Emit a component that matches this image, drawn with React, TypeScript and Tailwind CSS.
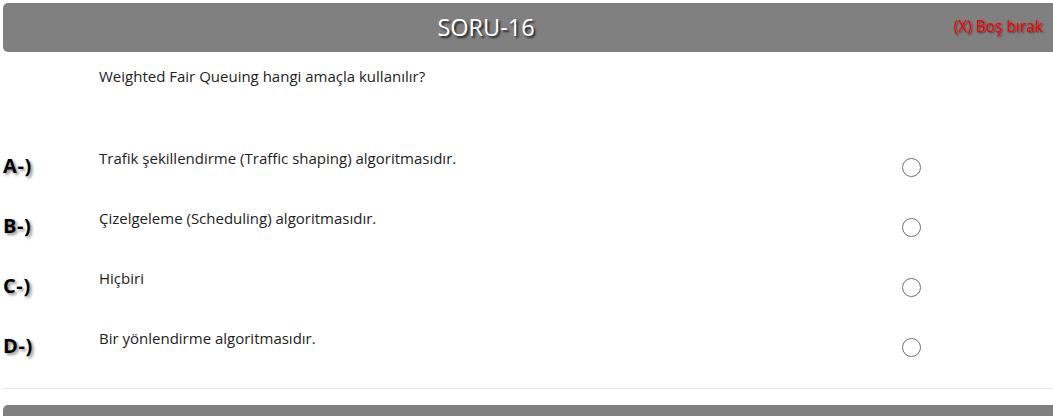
import React from 'react';

const options = [
  { key: 'A', text: 'Trafik şekillendirme (Traffic shaping) algoritmasıdır.' },
  { key: 'B', text: 'Çizelgeleme (Scheduling) algoritmasıdır.' },
  { key: 'C', text: 'Hiçbiri' },
  { key: 'D', text: 'Bir yönlendirme algoritmasıdır.' },
];

export default function App() {
  return (
    <div className="w-full h-[416px] overflow-hidden bg-white font-['Open_Sans',sans-serif] text-[#222]">
      <div className="pt-[3px] pl-[3px]">
        {/* header */}
        <div className="relative h-[49px] bg-[#808080] rounded-l-[5px] flex items-center">
          <div className="w-[966px] text-center text-[23.5px] text-white [text-shadow:2px_2px_2px_rgba(0,0,0,0.7)]">
            SORU-16
          </div>
          <span className="absolute right-[10px] top-[12px] text-[15.5px] leading-[22px] text-[#ff0000] [text-shadow:1px_1px_2px_rgba(0,0,0,0.6)]">
            (X) Boş bırak
          </span>
        </div>

        {/* question */}
        <div className="h-[90px] pt-[14px] pl-[96px] text-[15px] leading-[20px]">
          Weighted Fair Queuing hangi amaçla kullanılır?
        </div>

        {/* options */}
        {options.map((o) => (
          <div key={o.key} className="h-[60px] flex items-start">
            <div className="w-[96px] pt-[11px] text-[20px] leading-[26px] tracking-[0.6px] font-bold text-black [text-shadow:2px_2px_3px_rgba(0,0,0,0.45)]">
              {o.key}-)
            </div>
            <div className="w-[803px] pt-[6px] text-[15px] leading-[20px]">{o.text}</div>
            <div className="pt-[16px]">
              <div className="w-[19px] h-[19px] rounded-full border-[1.5px] border-[#707070] bg-white" />
            </div>
          </div>
        ))}

        <div className="mt-[6px] h-px bg-[#e3e3e3]" />
        <div className="mt-[16px] h-[49px] bg-[#808080] rounded-l-[5px]" />
      </div>
    </div>
  );
}
